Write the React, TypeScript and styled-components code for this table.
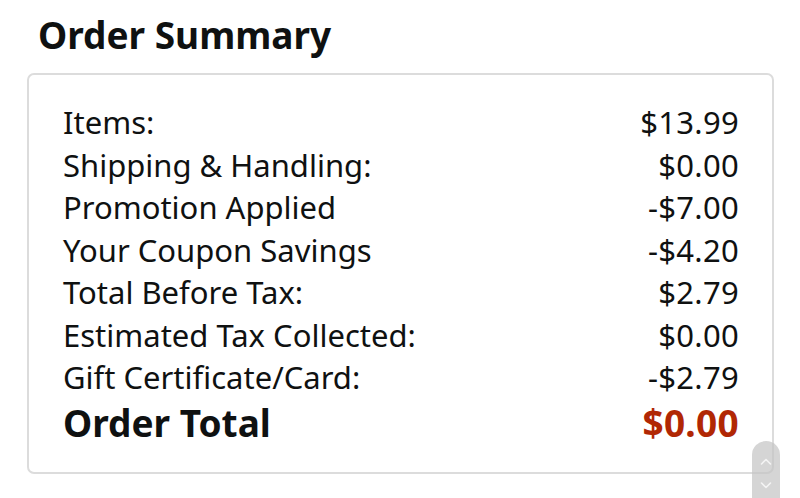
import React from "react";
import styled, { createGlobalStyle } from "styled-components";

const Global = createGlobalStyle`
  html, body { margin: 0; padding: 0; background: #fff; }
  body { font-family: "Noto Sans", "Open Sans", sans-serif; color: #0f1111; }
`;

const Page = styled.div`
  width: 800px;
  height: 498px;
  overflow: hidden;
  padding: 12px 26px 0 27px;
  box-sizing: border-box;
  position: relative;
`;

const Title = styled.h1`
  margin: 0 0 15px 11px;
  font-size: 37px;
  font-weight: 700;
  line-height: 46px;
  color: #0f1111;
`;

const Card = styled.div`
  border: 2px solid #dcdcdc;
  border-radius: 7px;
  padding: 26px 33px 24px 34px;
  height: 401px;
  box-sizing: border-box;
  display: flex;
  flex-direction: column;
`;

const Row = styled.div<{ $total?: boolean }>`
  display: flex;
  justify-content: space-between;
  align-items: center;
  font-size: ${(p) => (p.$total ? "37px" : "31px")};
  font-weight: ${(p) => (p.$total ? 700 : 400)};
  line-height: ${(p) => (p.$total ? "47px" : "42.5px")};
  white-space: nowrap;
`;

const Value = styled.span<{ $red?: boolean }>`
  color: ${(p) => (p.$red ? "#b12704" : "#0f1111")};
  letter-spacing: 0.3px;
`;

const Scroller = styled.div`
  position: absolute;
  left: 752px;
  top: 441px;
  width: 28px;
  height: 70px;
  border-radius: 14px 14px 0 0;
  background: rgba(195, 195, 195, 0.7);
  display: flex;
  flex-direction: column;
  align-items: center;
  padding-top: 17px;
  gap: 17px;
  box-sizing: border-box;
`;

const rows: [string, string][] = [
  ["Items:", "$13.99"],
  ["Shipping & Handling:", "$0.00"],
  ["Promotion Applied", "-$7.00"],
  ["Your Coupon Savings", "-$4.20"],
  ["Total Before Tax:", "$2.79"],
  ["Estimated Tax Collected:", "$0.00"],
  ["Gift Certificate/Card:", "-$2.79"],
];

const Chevron = ({ up }: { up?: boolean }) => (
  <svg width="12" height="7" viewBox="0 0 12 7">
    <path
      d={up ? "M1.5 6 L6 1.5 L10.5 6" : "M1.5 1 L6 5.5 L10.5 1"}
      fill="none"
      stroke="#f4f4f4"
      strokeWidth="1.6"
      strokeLinecap="round"
      strokeLinejoin="round"
    />
  </svg>
);

export default function App() {
  return (
    <>
      <Global />
      <Page>
        <Title>Order Summary</Title>
        <Card>
          {rows.map(([l, v]) => (
            <Row key={l}>
              <span>{l}</span>
              <Value>{v}</Value>
            </Row>
          ))}
          <Row $total>
            <span>Order Total</span>
            <Value $red>$0.00</Value>
          </Row>
        </Card>
        <Scroller>
          <Chevron up />
          <Chevron />
        </Scroller>
      </Page>
    </>
  );
}
